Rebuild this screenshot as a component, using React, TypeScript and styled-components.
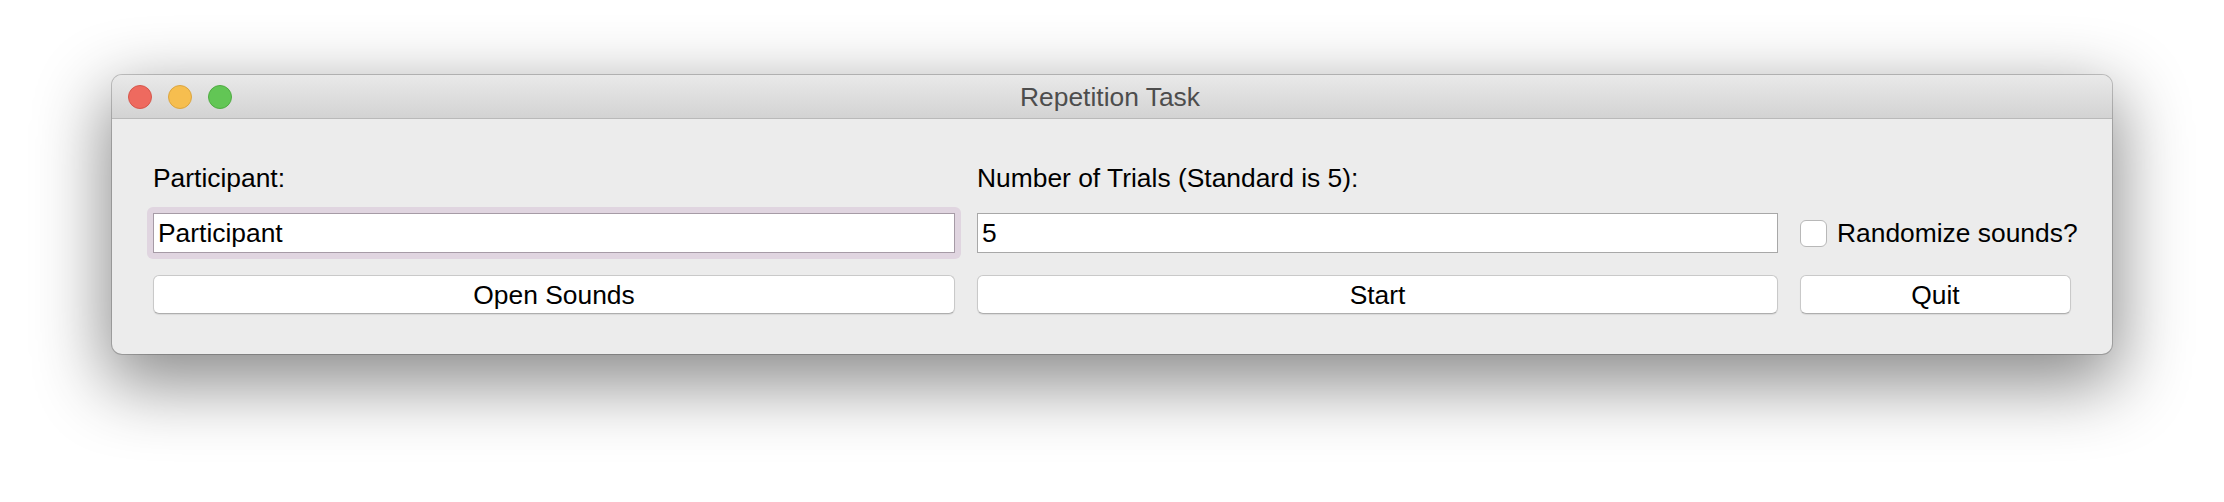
import React from 'react'
import styled, { createGlobalStyle } from 'styled-components'

const GlobalStyle = createGlobalStyle`
	html, body {
		margin: 0;
		padding: 0;
		background: #ffffff;
	}
	body {
		font-family: 'Liberation Sans', Arial, sans-serif;
	}
	* {
		box-sizing: border-box;
	}
`

const Desktop = styled.div`
	width: 2224px;
	height: 502px;
	padding: 75px 0 0 112px;
	background: #ffffff;
	overflow: hidden;
`

const Window = styled.div`
	width: 2000px;
	display: flex;
	flex-direction: column;
	background: #ececec;
	border-radius: 10px;
	overflow: hidden;
	box-shadow: 0 0 0 1px rgba(0, 0, 0, 0.2), 0 24px 70px 6px rgba(0, 0, 0, 0.46);
`

const TitleBar = styled.div`
	position: relative;
	height: 44px;
	display: flex;
	align-items: center;
	justify-content: center;
	background: linear-gradient(#e9e9e9, #d3d3d3);
	border-bottom: 1px solid #b9b9b9;
`

const Lights = styled.div`
	position: absolute;
	left: 16px;
	top: 10px;
	display: flex;
	gap: 16px;
`

const Light = styled.span<{ $fill: string; $edge: string }>`
	width: 24px;
	height: 24px;
	border-radius: 50%;
	background: ${(p) => p.$fill};
	border: 1px solid ${(p) => p.$edge};
`

const Title = styled.div`
	font-size: 26.4px;
	line-height: 32px;
	color: #4d4d4d;
	margin-right: 4px;
`

const Content = styled.div`
	display: grid;
	grid-template-columns: 802px 801px 271px;
	column-gap: 22px;
	padding: 43px 41px 40px 41px;
	font-size: 26.4px;
	color: #000;
`

const Label = styled.div`
	height: 32px;
	line-height: 32px;
	white-space: nowrap;
`

const InputCell = styled.div`
	margin-top: 19px;
	height: 40px;
	display: flex;
	align-items: center;
`

const FocusRing = styled.div`
	flex: 1;
	margin: -6px;
	padding: 6px;
	border-radius: 6px;
	background: #e0d5e0;
	display: flex;
`

const TextInput = styled.input<{ $focused?: boolean }>`
	width: 100%;
	height: 40px;
	margin: 0;
	padding: 0 4px;
	border: 1px solid ${(p) => (p.$focused ? '#a69ba6' : '#a8a8a8')};
	border-radius: 0;
	background: #ffffff;
	font-family: inherit;
	font-size: 26.4px;
	color: #000;
	outline: none;
`

const CheckRow = styled.label`
	display: flex;
	align-items: center;
	gap: 10px;
	white-space: nowrap;
	line-height: 32px;
`

const Box = styled.span`
	width: 27px;
	height: 27px;
	flex: none;
	background: #ffffff;
	border: 1px solid #b8b8b8;
	border-radius: 6px;
`

const ButtonCell = styled.div`
	margin-top: 22px;
	height: 39px;
	display: flex;
`

const Button = styled.button`
	flex: 1;
	height: 39px;
	margin: 0;
	padding: 0;
	background: #ffffff;
	border: 1px solid #c9c9c9;
	border-bottom-color: #aeaeae;
	border-radius: 6px;
	box-shadow: 0 1px 1px rgba(0, 0, 0, 0.08);
	font-family: inherit;
	font-size: 26.4px;
	color: #000;
	line-height: 36px;
`

export default function App() {
	return (
		<>
			<GlobalStyle />
			<Desktop>
				<Window>
					<TitleBar>
						<Lights>
							<Light $fill="#ee6a5f" $edge="#d5574c" />
							<Light $fill="#f6be4f" $edge="#dba540" />
							<Light $fill="#62c655" $edge="#50ab43" />
						</Lights>
						<Title>Repetition Task</Title>
					</TitleBar>
					<Content>
						<Label>Participant:</Label>
						<Label>Number of Trials (Standard is 5):</Label>
						<div />

						<InputCell>
							<FocusRing>
								<TextInput $focused defaultValue="Participant" />
							</FocusRing>
						</InputCell>
						<InputCell>
							<TextInput defaultValue="5" />
						</InputCell>
						<InputCell>
							<CheckRow>
								<Box />
								Randomize sounds?
							</CheckRow>
						</InputCell>

						<ButtonCell>
							<Button>Open Sounds</Button>
						</ButtonCell>
						<ButtonCell>
							<Button>Start</Button>
						</ButtonCell>
						<ButtonCell>
							<Button>Quit</Button>
						</ButtonCell>
					</Content>
				</Window>
			</Desktop>
		</>
	)
}
